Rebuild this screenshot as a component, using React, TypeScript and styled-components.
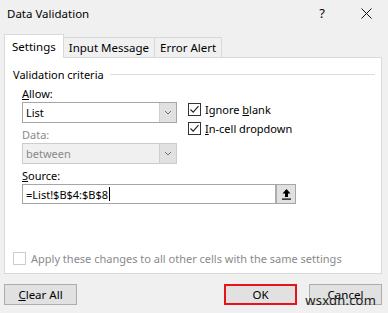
import React from 'react';
import styled, { createGlobalStyle } from 'styled-components';

const GlobalStyle = createGlobalStyle`
  html, body {
    margin: 0;
    padding: 0;
    background: #f0f0f0;
  }
  body {
    font-family: 'Noto Sans', 'Segoe UI', sans-serif;
    font-size: 11px;
    color: #000;
  }
`;

const Dialog = styled.div`
  width: 388px;
  height: 313px;
  background: #f0f0f0;
  display: flex;
  flex-direction: column;
  position: relative;
  overflow: hidden;
`;

const TitleBar = styled.div`
  height: 26px;
  display: flex;
  align-items: center;
  padding-left: 7px;
`;

const TitleText = styled.div`
  flex: 1;
  font-size: 11.5px;
`;

const TitleIcon = styled.div`
  width: 44px;
  display: flex;
  justify-content: center;
  align-items: center;
  font-size: 13px;
`;

const TabRow = styled.div`
  display: flex;
  align-items: flex-end;
  margin-top: 9px;
  padding-left: 4px;
  height: 22px;
`;

const Tab = styled.div<{ $active?: boolean }>`
  height: ${p => (p.$active ? 23 : 19)}px;
  padding: 0 ${p => (p.$active ? 7 : 5)}px;
  display: flex;
  align-items: center;
  font-size: 11.5px;
  background: ${p => (p.$active ? '#fff' : '#f0f0f0')};
  border: 1px solid #d9d9d9;
  border-bottom: none;
  margin-right: -1px;
  margin-bottom: ${p => (p.$active ? -1 : 0)}px;
  position: relative;
  z-index: ${p => (p.$active ? 2 : 1)};
`;

const Panel = styled.div`
  margin: 0 6px 0 4px;
  height: 217px;
  background: #fff;
  border: 1px solid #d9d9d9;
  display: flex;
  flex-direction: column;
  padding: 8px 6px 0 8px;
  box-sizing: border-box;
`;

const GroupHeader = styled.div`
  display: flex;
  align-items: center;
  gap: 6px;
  height: 16px;
`;

const GroupLine = styled.div`
  flex: 1;
  height: 1px;
  background: #dcdcdc;
`;

const Criteria = styled.div`
  display: flex;
  padding-left: 9px;
  gap: 11px;
  margin-top: 4px;
`;

const FieldCol = styled.div`
  display: flex;
  flex-direction: column;
`;

const Label = styled.div<{ $disabled?: boolean }>`
  height: 15px;
  line-height: 15px;
  color: ${p => (p.$disabled ? '#8a8a8a' : '#000')};
  margin-bottom: 1px;
`;

const U = styled.span`
  text-decoration: underline;
`;

const Combo = styled.div<{ $disabled?: boolean }>`
  width: 155px;
  height: 21px;
  box-sizing: border-box;
  border: 1px solid ${p => (p.$disabled ? '#cccccc' : '#a6a6a6')};
  background: ${p => (p.$disabled ? '#f0f0f0' : '#fff')};
  color: ${p => (p.$disabled ? '#8a8a8a' : '#000')};
  display: flex;
  align-items: stretch;
  margin-bottom: 4px;
`;

const ComboText = styled.div`
  flex: 1;
  display: flex;
  align-items: center;
  padding-left: 3px;
`;

const ComboButton = styled.div`
  width: 16px;
  background: #e1e1e1;
  border-left: 1px solid #cfcfcf;
  display: flex;
  align-items: center;
  justify-content: center;
`;

const CheckCol = styled.div`
  display: flex;
  flex-direction: column;
  gap: 6px;
  margin-top: 17px;
`;

const CheckRow = styled.div<{ $disabled?: boolean }>`
  display: flex;
  align-items: center;
  gap: 4px;
  height: 13px;
  color: ${p => (p.$disabled ? '#8a8a8a' : '#000')};
`;

const Box = styled.div<{ $disabled?: boolean }>`
  width: 13px;
  height: 13px;
  box-sizing: border-box;
  border: 1px solid ${p => (p.$disabled ? '#cccccc' : '#333')};
  background: #fff;
  display: flex;
  align-items: center;
  justify-content: center;
`;

const SourceWrap = styled.div`
  padding-left: 9px;
`;

const SourceInput = styled.div`
  width: 274px;
  height: 20px;
  box-sizing: border-box;
  border: 1px solid #a6a6a6;
  display: flex;
  align-items: stretch;
`;

const SourceText = styled.div`
  flex: 1;
  display: flex;
  align-items: center;
  padding-left: 3px;
`;

const Caret = styled.span`
  display: inline-block;
  width: 1px;
  height: 14px;
  background: #000;
  margin-left: 1px;
`;

const RefButton = styled.div`
  width: 18px;
  background: #e1e1e1;
  border-left: 2px solid #adadad;
  display: flex;
  align-items: center;
  justify-content: center;
`;

const Spacer = styled.div`
  flex: 1;
`;

const ApplyRow = styled(CheckRow)`
  margin-bottom: 8px;
  gap: 5px;
`;

const Footer = styled.div`
  display: flex;
  align-items: center;
  padding: 0 6px 0 4px;
  margin-top: 10px;
  gap: 12px;
`;

const Button = styled.div<{ $highlight?: boolean }>`
  width: 73px;
  height: 21px;
  box-sizing: border-box;
  font-size: 11.5px;
  background: #e1e1e1;
  border: ${p => (p.$highlight ? '2px solid #e8121b' : '1px solid #adadad')};
  display: flex;
  align-items: center;
  justify-content: center;
`;

const Watermark = styled.div`
  position: absolute;
  right: 12px;
  bottom: 4px;
  font-size: 13px;
  color: #222;
  letter-spacing: 0.2px;
`;

const Check = () => (
  <svg width="11" height="11" viewBox="0 0 11 11">
    <path d="M1.5 5.5 L4.2 8.2 L9.5 2.2" fill="none" stroke="#222" strokeWidth="1.1" />
  </svg>
);

const Chevron = () => (
  <svg width="8" height="5" viewBox="0 0 8 5">
    <path d="M1 1 L4 4 L7 1" fill="none" stroke="#707070" strokeWidth="1" />
  </svg>
);

const CloseIcon = () => (
  <svg width="11" height="11" viewBox="0 0 11 11">
    <path d="M0.5 0.5 L10.5 10.5 M10.5 0.5 L0.5 10.5" stroke="#111" strokeWidth="1" />
  </svg>
);

const UpArrow = () => (
  <svg width="11" height="12" viewBox="0 0 11 12">
    <path d="M5.5 1 L9.5 5.5 L7 5.5 L7 9 L4 9 L4 5.5 L1.5 5.5 Z" fill="#000" />
    <rect x="1" y="10.5" width="9" height="1.2" fill="#000" />
  </svg>
);

export default function App() {
  return (
    <>
      <GlobalStyle />
      <Dialog>
        <TitleBar>
          <TitleText>Data Validation</TitleText>
          <TitleIcon>?</TitleIcon>
          <TitleIcon><CloseIcon /></TitleIcon>
        </TitleBar>

        <TabRow>
          <Tab $active>Settings</Tab>
          <Tab>Input Message</Tab>
          <Tab>Error Alert</Tab>
        </TabRow>

        <Panel>
          <GroupHeader>
            <span>Validation criteria</span>
            <GroupLine />
          </GroupHeader>

          <Criteria>
            <FieldCol>
              <Label><U>A</U>llow:</Label>
              <Combo>
                <ComboText>List</ComboText>
                <ComboButton><Chevron /></ComboButton>
              </Combo>
              <Label $disabled>Data:</Label>
              <Combo $disabled>
                <ComboText>between</ComboText>
                <ComboButton><Chevron /></ComboButton>
              </Combo>
            </FieldCol>
            <CheckCol>
              <CheckRow>
                <Box><Check /></Box>
                <span>Ignore <U>b</U>lank</span>
              </CheckRow>
              <CheckRow>
                <Box><Check /></Box>
                <span><U>I</U>n-cell dropdown</span>
              </CheckRow>
            </CheckCol>
          </Criteria>

          <SourceWrap>
            <Label><U>S</U>ource:</Label>
            <SourceInput>
              <SourceText>=List!$B$4:$B$8<Caret /></SourceText>
              <RefButton><UpArrow /></RefButton>
            </SourceInput>
          </SourceWrap>

          <Spacer />

          <ApplyRow $disabled>
            <Box $disabled />
            <span>Apply these changes to all other cells with the same settings</span>
          </ApplyRow>
        </Panel>

        <Footer>
          <Button><span><U>C</U>lear All</span></Button>
          <Spacer />
          <Button $highlight>OK</Button>
          <Button>Cancel</Button>
        </Footer>

        <Watermark>wsxdn.com</Watermark>
      </Dialog>
    </>
  );
}
